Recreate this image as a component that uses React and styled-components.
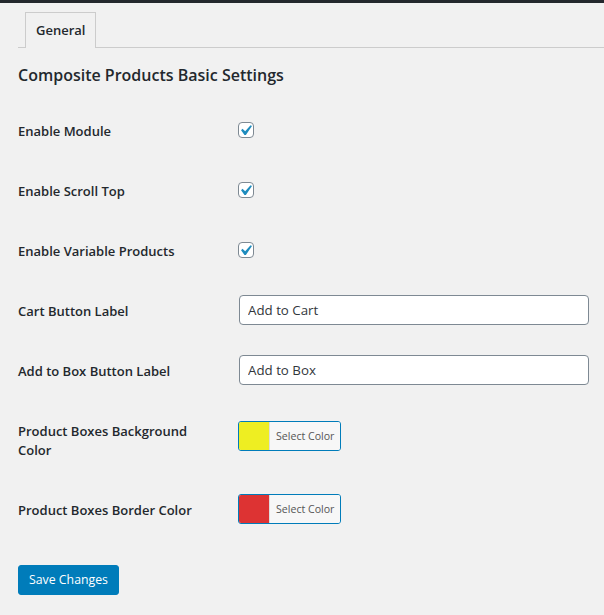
import styled, { createGlobalStyle } from "styled-components";

const GlobalStyle = createGlobalStyle`
    body {
        margin: 0;
        background: #f1f1f1;
        color: #23282d;
        font-family: "Open Sans", "Noto Sans", sans-serif;
        font-size: 13px;
    }
`
const TopBar = styled.div`
    height: 3px;
    background-color: #23282d;
`
const Wrap = styled.div`
    padding-left: 18px;
`
const TabNav = styled.div`
    margin-top: 9px;
    padding-left: 7px;
    display: flex;
    align-items: flex-end;
    border-bottom: 1px solid #ccc;
`
const Tab = styled.div`
    width: 49px;
    padding: 5px 10px 6px;
    line-height: 24px;
    font-size: 13px;
    font-weight: 600;
    border: 1px solid #ccc;
    border-bottom: none;
    background-color: #f1f1f1;
    margin-bottom: -1px;
`
const Heading = styled.h2`
    margin: 15px 0 0;
    font-size: 16px;
    line-height: 24px;
    font-weight: 600;
`
const Table = styled.div`
    margin-top: 15px;
`
const Row = styled.div`
    display: grid;
    grid-template-columns: 220px 1fr;
    align-items: start;
`
const Label = styled.div`
    width: 180px;
    padding: 20px 0 21px;
    line-height: 19px;
    font-size: 13px;
    font-weight: 600;
`
const Field = styled.div`
    padding-top: ${p => p.$top}px;
    padding-right: 14px;
`
const Box = styled.span`
    display: block;
    width: 16px;
    height: 16px;
    box-sizing: border-box;
    border: 1px solid #7e8993;
    border-radius: 4px;
    background: #fff;
    position: relative;
    svg {
        position: absolute;
        left: -4px;
        top: -3px;
    }
`
const TextInput = styled.input`
    display: block;
    box-sizing: border-box;
    width: calc(100% - 2px);
    margin: 0 1px;
    height: 30px;
    padding: 0 8px;
    border: 1px solid #7e8993;
    border-radius: 4px;
    background: #fff;
    color: #32373c;
    font-family: inherit;
    font-size: 13.3px;
    outline: none;
`
const Picker = styled.div`
    display: flex;
    width: 103px;
    height: 30px;
    box-sizing: border-box;
    border: 1px solid #007cba;
    border-radius: 3px;
    overflow: hidden;
`
const Swatch = styled.span`
    width: 30px;
    background-color: ${p => p.$color};
`
const PickerText = styled.span`
    flex: 1;
    background: #f7f7f7;
    border-left: 1px solid #ddd;
    color: #555;
    font-size: 10.6px;
    line-height: 28px;
    padding-left: 6px;
`
const SaveButton = styled.button`
    margin-top: 24px;
    width: 101px;
    height: 30px;
    padding: 0;
    border: 1px solid #007cba;
    border-radius: 3px;
    background: #007cba;
    color: #fff;
    font-family: inherit;
    font-size: 12.3px;
    line-height: 28px;
`

const Check = () => (
    <Box>
        <svg width="21" height="21" viewBox="0 0 20 20">
            <path d="M14.83 4.89l1.34.94-5.81 8.38H9.02L5.78 9.67l1.34-1.25 2.57 2.4z" fill="#1e8cbe" />
        </svg>
    </Box>
)

const ColorPicker = ({color}) => (
    <Picker>
        <Swatch $color={color} />
        <PickerText>Select Color</PickerText>
    </Picker>
)

const rows = [
    { label: "Enable Module", top: 20, field: <Check /> },
    { label: "Enable Scroll Top", top: 20, field: <Check /> },
    { label: "Enable Variable Products", top: 20, field: <Check /> },
    { label: "Cart Button Label", top: 13, field: <TextInput defaultValue="Add to Cart" /> },
    { label: "Add to Box Button Label", top: 13, field: <TextInput defaultValue="Add to Box" /> },
    { label: "Product Boxes Background Color", top: 19, field: <ColorPicker color="#eeee22" /> },
    { label: "Product Boxes Border Color", top: 13, field: <ColorPicker color="#dd3333" /> },
]

const App = () => {
    return(
        <>
            <GlobalStyle />
            <TopBar />
            <Wrap>
                <TabNav>
                    <Tab>General</Tab>
                </TabNav>
                <Heading>Composite Products Basic Settings</Heading>
                <Table>
                    {rows.map(r => (
                        <Row key={r.label}>
                            <Label>{r.label}</Label>
                            <Field $top={r.top}>{r.field}</Field>
                        </Row>
                    ))}
                </Table>
                <SaveButton>Save Changes</SaveButton>
            </Wrap>
        </>
    )
}

export default App;
